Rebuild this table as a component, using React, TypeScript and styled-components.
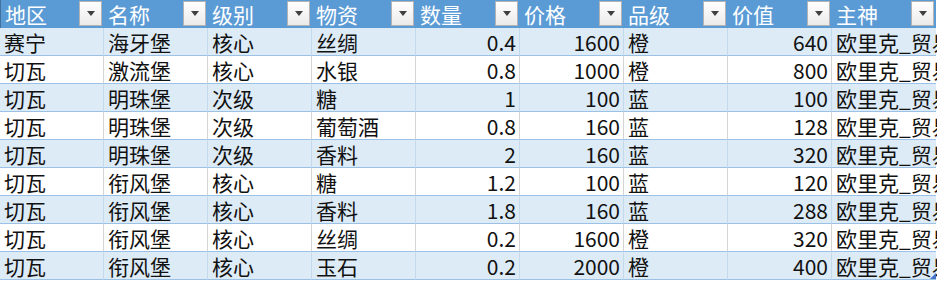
import styled, { createGlobalStyle } from "styled-components";

const GlobalStyle = createGlobalStyle`
    html, body {
        margin: 0;
        padding: 0;
        background: #ffffff;
        overflow: hidden;
    }
    body {
        font-family: "Noto Sans CJK SC", "Noto Sans", sans-serif;
    }
`;

const Sheet = styled.div`
    position: relative;
    width: 937px;
    height: 281px;
    overflow: hidden;
    background: #ffffff;
`;

const Grid = styled.div`
    display: grid;
    grid-template-columns: repeat(9, 104px);
    width: 936px;
`;

const HeadCell = styled.div<{ first?: boolean }>`
    position: relative;
    display: flex;
    align-items: center;
    height: 28px;
    background: #5b9bd5;
    color: #ffffff;
    font-size: 21px;
    padding-left: 4px;
    white-space: nowrap;
    box-sizing: border-box;
    border-left: ${(p) => (p.first ? "1px solid #41719c" : "none")};
`;

const FilterButton = styled.div`
    position: absolute;
    right: 2px;
    top: 1px;
    width: 23px;
    height: 25px;
    box-sizing: border-box;
    background: linear-gradient(#ffffff, #eaeaea);
    border: 1px solid #b4b4b4;
    display: flex;
    align-items: center;
    justify-content: center;
    &::after {
        content: "";
        border-left: 4px solid transparent;
        border-right: 4px solid transparent;
        border-top: 5px solid #404040;
    }
`;

const Cell = styled.div<{ band: boolean; num?: boolean; last?: boolean }>`
    display: flex;
    align-items: center;
    justify-content: ${(p) => (p.num ? "flex-end" : "flex-start")};
    height: 28px;
    box-sizing: border-box;
    background: ${(p) => (p.band ? "#ddebf7" : "#ffffff")};
    border-bottom: 1px solid #9bc2e6;
    border-right: ${(p) => (p.last ? "none" : p.band ? "1px solid #c5d9ec" : "1px solid #d4d4d4")};
    color: #111111;
    font-size: 21px;
    padding: ${(p) => (p.num ? "0 3px 0 0" : "0 0 0 4px")};
    white-space: nowrap;
`;

const ResizeHandle = styled.div`
    position: absolute;
    right: 1px;
    bottom: 2px;
    width: 0;
    height: 0;
    border-left: 6px solid transparent;
    border-bottom: 6px solid #4472c4;
`;

const headers = ["地区", "名称", "级别", "物资", "数量", "价格", "品级", "价值", "主神"];

const rows: (string | number)[][] = [
    ["赛宁", "海牙堡", "核心", "丝绸", 0.4, 1600, "橙", 640, "欧里克_贸易"],
    ["切瓦", "激流堡", "核心", "水银", 0.8, 1000, "橙", 800, "欧里克_贸易"],
    ["切瓦", "明珠堡", "次级", "糖", 1, 100, "蓝", 100, "欧里克_贸易"],
    ["切瓦", "明珠堡", "次级", "葡萄酒", 0.8, 160, "蓝", 128, "欧里克_贸易"],
    ["切瓦", "明珠堡", "次级", "香料", 2, 160, "蓝", 320, "欧里克_贸易"],
    ["切瓦", "衔风堡", "核心", "糖", 1.2, 100, "蓝", 120, "欧里克_贸易"],
    ["切瓦", "衔风堡", "核心", "香料", 1.8, 160, "蓝", 288, "欧里克_贸易"],
    ["切瓦", "衔风堡", "核心", "丝绸", 0.2, 1600, "橙", 320, "欧里克_贸易"],
    ["切瓦", "衔风堡", "核心", "玉石", 0.2, 2000, "橙", 400, "欧里克_贸易"],
];

function App() {
    return (
        <>
            <GlobalStyle />
            <Sheet>
                <Grid>
                    {headers.map((h, i) => (
                        <HeadCell key={h} first={i === 0}>
                            {h}
                            <FilterButton />
                        </HeadCell>
                    ))}
                    {rows.map((row, r) =>
                        row.map((v, c) => (
                            <Cell
                                key={`${r}-${c}`}
                                band={r % 2 === 0}
                                num={typeof v === "number"}
                                last={c === row.length - 1}
                            >
                                {v}
                            </Cell>
                        ))
                    )}
                </Grid>
                <ResizeHandle />
            </Sheet>
        </>
    );
}

export default App;
